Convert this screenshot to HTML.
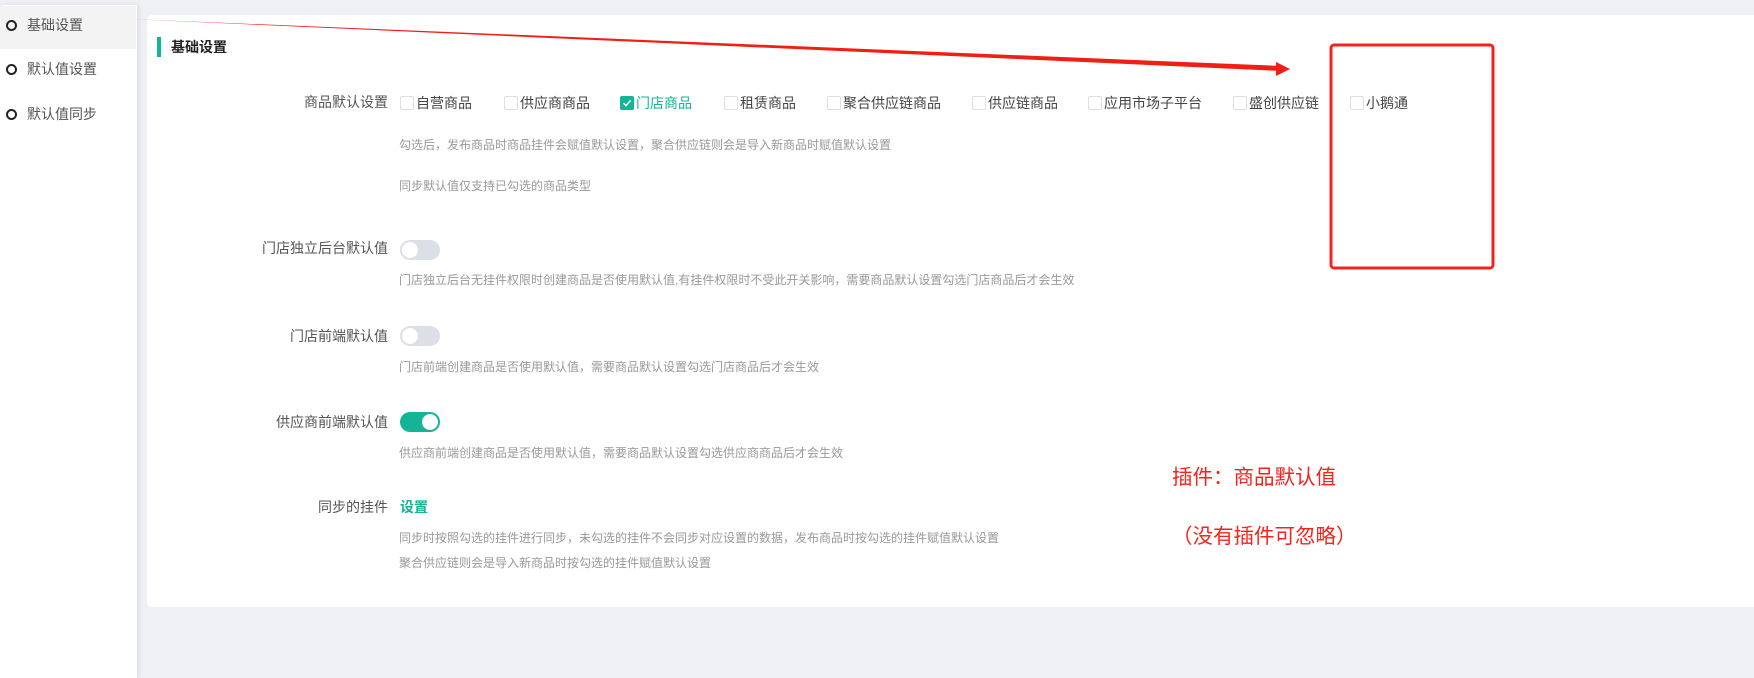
<!DOCTYPE html>
<html><head><meta charset="utf-8"><style>
*{margin:0;padding:0;box-sizing:border-box}
body{width:1754px;height:678px;background:#eef0f3;font-family:"Liberation Sans","Noto Sans CJK SC",sans-serif;position:relative;overflow:hidden;color:#333}
.abs{position:absolute;white-space:nowrap}
.side{position:absolute;left:0;top:5px;width:137px;height:673px;background:#fff;box-shadow:2px 0 4px rgba(0,0,0,.08);border-top-left-radius:4px}
.sel{position:absolute;left:0;top:6px;width:136px;height:43px;background:#f3f3f3}
.si{position:absolute;left:6px;font-size:14px;color:#555;display:flex;align-items:center;height:20px}
.si i{display:inline-block;width:11px;height:11px;border:2px solid #222;border-radius:50%;margin-right:10px}
.card{position:absolute;left:147px;top:15px;width:1607px;height:592px;background:#fff;border-radius:5px 0 0 5px}
.lbl{position:absolute;font-size:14px;color:#555;text-align:right;width:260px;left:128px;height:20px;line-height:20px}
.desc{position:absolute;left:399px;font-size:12px;color:#999;height:16px;line-height:16px;white-space:nowrap}
.cb{position:absolute;top:94px;font-size:14px;color:#444;display:flex;align-items:center;height:18px;white-space:nowrap}
.cb i{display:inline-block;width:14px;height:14px;border:1px solid #dcdfe6;border-radius:2px;margin-right:2px;background:#fff}
.tg{position:absolute;left:400px;width:40px;height:20px;border-radius:10px;background:#dcdfe6}
.tg b{position:absolute;left:2px;top:2px;width:16px;height:16px;border-radius:50%;background:#fff}
.tg.on{background:#13b596}.tg.on b{left:22px}
</style></head><body>
<div class="side"></div>
<div class="sel"></div>
<div class="si" style="top:15px"><i></i>基础设置</div>
<div class="si" style="top:59px"><i></i>默认值设置</div>
<div class="si" style="top:104px"><i></i>默认值同步</div>
<div class="card"></div>
<div class="abs" style="left:157px;top:37px;width:4px;height:20px;background:#13b596"></div>
<div class="abs" style="left:171px;top:37px;font-size:14px;font-weight:bold;color:#222;line-height:20px">基础设置</div>

<div class="lbl" style="top:92px">商品默认设置</div>
<div class="cb" style="left:400px"><i></i>自营商品</div>
<div class="cb" style="left:504px"><i></i>供应商商品</div>
<div class="cb" style="left:620px;color:#13b596"><i style="background:#13b596;border-color:#13b596;position:relative"><svg width="12" height="12" viewBox="0 0 12 12" style="position:absolute;left:0;top:0"><path d="M2.5 6.2 L5 8.6 L9.6 3.4" stroke="#fff" stroke-width="1.6" fill="none"/></svg></i>门店商品</div>
<div class="cb" style="left:724px"><i></i>租赁商品</div>
<div class="cb" style="left:827px"><i></i>聚合供应链商品</div>
<div class="cb" style="left:972px"><i></i>供应链商品</div>
<div class="cb" style="left:1088px"><i></i>应用市场子平台</div>
<div class="cb" style="left:1233px"><i></i>盛创供应链</div>
<div class="cb" style="left:1350px"><i></i>小鹅通</div>
<div class="desc" style="top:137px">勾选后，发布商品时商品挂件会赋值默认设置，聚合供应链则会是导入新商品时赋值默认设置</div>
<div class="desc" style="top:178px">同步默认值仅支持已勾选的商品类型</div>

<div class="lbl" style="top:238px">门店独立后台默认值</div>
<div class="tg" style="top:240px"><b></b></div>
<div class="desc" style="top:272px">门店独立后台无挂件权限时创建商品是否使用默认值,有挂件权限时不受此开关影响，需要商品默认设置勾选门店商品后才会生效</div>

<div class="lbl" style="top:326px">门店前端默认值</div>
<div class="tg" style="top:326px"><b></b></div>
<div class="desc" style="top:359px">门店前端创建商品是否使用默认值，需要商品默认设置勾选门店商品后才会生效</div>

<div class="lbl" style="top:412px">供应商前端默认值</div>
<div class="tg on" style="top:412px"><b></b></div>
<div class="desc" style="top:445px">供应商前端创建商品是否使用默认值，需要商品默认设置勾选供应商商品后才会生效</div>

<div class="lbl" style="top:497px">同步的挂件</div>
<div class="abs" style="left:400px;top:497px;font-size:14px;font-weight:bold;color:#13b596;line-height:20px">设置</div>
<div class="desc" style="top:530px">同步时按照勾选的挂件进行同步，未勾选的挂件不会同步对应设置的数据，发布商品时按勾选的挂件赋值默认设置</div>
<div class="desc" style="top:555px">聚合供应链则会是导入新商品时按勾选的挂件赋值默认设置</div>

<div class="abs" style="left:1172px;top:465px;font-size:20.5px;color:#f5231b;line-height:26px">插件：商品默认值</div>
<div class="abs" style="left:1172px;top:524px;font-size:20.5px;color:#f5231b;line-height:26px">（没有插件可忽略）</div>

<svg class="abs" style="left:0;top:0" width="1754" height="678">
<polygon points="130,19 1282,66 1282,71" fill="#f01e14"/>
<polygon points="1276,62 1290,69 1276,76" fill="#f01e14"/>
<rect x="1331" y="45" width="162" height="223" rx="3" fill="none" stroke="#f5231b" stroke-width="3"/>
</svg>
</body></html>
